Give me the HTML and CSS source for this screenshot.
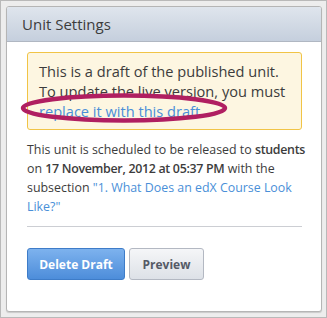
FILE: index.html
```html
<!DOCTYPE html>
<html lang="en">
<head>
  <meta charset="UTF-8" />
  <title>Unit Settings</title>
  <link rel="stylesheet" href="styles.css">
</head>
<body>
  <div class="panel">
    <div class="panel-header">Unit Settings</div>
    <div class="panel-body">
      <div class="notice">
        This is a draft of the published unit. To update the live version, you must
        <span class="highlight"><a href="#">replace it with this draft</a>.
          <svg class="ring" width="208" height="32" viewBox="0 0 208 32">
            <ellipse cx="104" cy="16" rx="101" ry="12.5" fill="none" stroke="#b01f61" stroke-width="4.5"/>
          </svg>
        </span>
      </div>
      <p class="release">This unit is scheduled to be released to <b>students</b> on <b>17 November, 2012 at 05:37 PM</b> with the subsection <a href="#">"1. What Does an edX Course Look Like?"</a></p>
      <div class="divider"></div>
      <div class="actions">
        <button class="btn btn-primary">Delete Draft</button>
        <button class="btn btn-default">Preview</button>
      </div>
    </div>
  </div>
</body>
</html>
```
FILE: styles.css
```css
html, body {
  margin: 0;
  padding: 0;
}
body {
  width: 327px;
  height: 318px;
  box-sizing: border-box;
  border: 1px solid #b9b9b9;
  background: #ededed;
  padding: 5px;
  font-family: 'Open Sans', sans-serif;
  color: #3c3c3c;
}
a {
  color: #4a8fd8;
  text-decoration: none;
}
.panel {
  width: 316px;
  height: 306px;
  box-sizing: border-box;
  background: #fff;
  border: 1px solid #b5b5b5;
  border-radius: 3px;
  box-shadow: 0 1px 1px rgba(0, 0, 0, 0.15);
}
.panel-header {
  height: 34px;
  line-height: 34px;
  padding-left: 15px;
  font-size: 15px;
  background: linear-gradient(#dfe5ed, #c5cfdd);
  border-bottom: 1px solid #b0b7c2;
  border-radius: 2px 2px 0 0;
}
.panel-body {
  padding: 10px 19px 0 20px;
}
.notice {
  background: #fdf6e1;
  border: 1px solid #f1c446;
  border-radius: 3px;
  padding: 8px 11px;
  font-size: 14.6px;
  line-height: 20px;
}
.highlight {
  position: relative;
}
.ring {
  position: absolute;
  left: -19px;
  top: -9px;
}
.release {
  margin: 10px -6px 0 0;
  font-size: 12.4px;
  line-height: 19px;
}
.release b {
  font-weight: 600;
  letter-spacing: -0.3px;
}
.divider {
  margin-top: 10px;
  border-top: 1px solid #ccced3;
}
.actions {
  display: flex;
  gap: 4px;
  margin-top: 21px;
}
.btn {
  height: 32px;
  border-radius: 3px;
  font-family: 'Open Sans', sans-serif;
  font-size: 12px;
  font-weight: 700;
  padding: 0;
  white-space: nowrap;
  cursor: pointer;
}
.btn-primary {
  width: 98px;
  color: #fff;
  background: linear-gradient(#7db2ee, #4d8dda);
  border: 1px solid #3e7cc8;
}
.btn-default {
  width: 75px;
  color: #555a66;
  background: linear-gradient(#f5f6f8, #dde1e7);
  border: 1px solid #b3b8c2;
}
```
